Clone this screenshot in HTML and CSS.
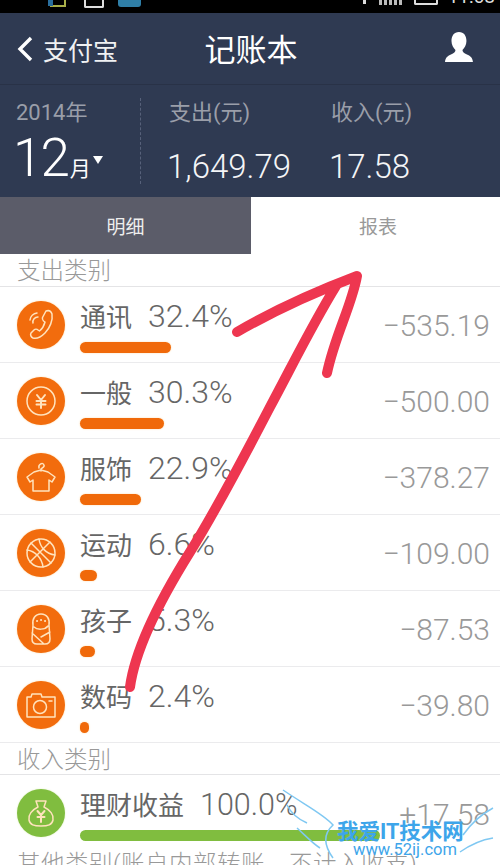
FILE: index.html
```html
<!DOCTYPE html>
<html>
<head>
    <title>记账本</title>
    <link rel="stylesheet" href="styles.css">
</head>
<body>
    <div class="statusbar">
        <div class="status-left">
            <svg width="20" height="13" viewBox="0 0 20 13"><rect x="3" y="-6" width="14" height="12" fill="none" stroke="#a9b04a" stroke-width="2"/><rect x="0" y="0" width="5" height="6" fill="#2a6f9e"/></svg>
            <span class="status-box"></span>
            <span class="status-app"></span>
        </div>
        <div class="status-right">
            <span class="status-dot"></span>
            <span class="status-signal"></span>
            <span class="status-box status-battery"></span>
            <span class="status-time">11:08</span>
        </div>
    </div>

    <div class="nav">
        <div class="nav-back">
            <svg width="16" height="26" viewBox="0 0 16 26"><path d="M14 2 L3 13 L14 24" fill="none" stroke="#fff" stroke-width="3.4"/></svg>
            <span>支付宝</span>
        </div>
        <div class="nav-title">记账本</div>
        <svg class="nav-user" width="28" height="30" viewBox="0 0 28 30"><path d="M14 0 C9 0 6.500 4 6.500 9 C6.500 13 8.500 16 10.500 18 C10.500 20 9 21 6 22.500 C3 24 .5 25 0 30 L28 30 C27.500 25 25 24 22 22.500 C19 21 17.500 20 17.500 18 C19.500 16 21.500 13 21.500 9 C21.500 4 19 0 14 0 Z" fill="#fff"/></svg>
    </div>

    <div class="summary">
        <div class="period">
            <div class="summary-label">2014年</div>
            <div class="month"><span class="month-num">12</span><span class="month-unit">月</span><span class="caret"></span></div>
        </div>
        <div class="stat stat-out">
            <div class="summary-label">支出(元)</div>
            <div class="stat-value">1,649.79</div>
        </div>
        <div class="stat">
            <div class="summary-label">收入(元)</div>
            <div class="stat-value">17.58</div>
        </div>
    </div>

    <div class="tabs">
        <div class="tab tab-active">明细</div>
        <div class="tab">报表</div>
    </div>

    <div class="section-title">支出类别</div>

    <div class="row">
        <div class="cat-icon">
            <svg width="48" height="48" viewBox="0 0 48 48"><path d="M29 10 C32 9 34 10 35 13 C36 19 33 27 28 32 C24 36 19 38 16 37 C14 36 13 34 14 32 L17 29 C18 28 20 28 21 29 L22.500 30 C25 28 27 25 28 21 L26.500 20 C25.500 19 25 18 25.500 16.500 Z M16 22 A5 5 0 0 1 21 16 M13 19 A8 8 0 0 1 20 12" class="glyph"/></svg>
        </div>
        <div class="cat-body">
            <div class="cat-line"><span class="cat-name">通讯</span><span class="cat-pct">32.4%</span></div>
            <div class="bar" style="width: 91px"></div>
        </div>
        <div class="amount">−535.19</div>
    </div>
    <div class="row">
        <div class="cat-icon">
            <svg width="48" height="48" viewBox="0 0 48 48"><circle cx="24" cy="24" r="14" class="glyph"/><path d="M20 18 L24 23 L28 18 M19.500 24 H28.500 M19.500 27.500 H28.500 M24 23 V31" class="glyph glyph-bold"/></svg>
        </div>
        <div class="cat-body">
            <div class="cat-line"><span class="cat-name">一般</span><span class="cat-pct">30.3%</span></div>
            <div class="bar" style="width: 84px"></div>
        </div>
        <div class="amount">−500.00</div>
    </div>
    <div class="row">
        <div class="cat-icon">
            <svg width="48" height="48" viewBox="0 0 48 48"><path d="M22 15 C21 11 26 9 27 12 C28 14 25 15 24 16 V18 M17 19 L24 17 L31 19 L38 24 L35 29 L32 27 V38 H16 V27 L13 29 L10 24 Z" class="glyph"/></svg>
        </div>
        <div class="cat-body">
            <div class="cat-line"><span class="cat-name">服饰</span><span class="cat-pct">22.9%</span></div>
            <div class="bar" style="width: 61px"></div>
        </div>
        <div class="amount">−378.27</div>
    </div>
    <div class="row">
        <div class="cat-icon">
            <svg width="48" height="48" viewBox="0 0 48 48"><circle cx="24" cy="24" r="14" class="glyph"/><path d="M14 14 L34 34 M33 13 L13 33 M22 10 C23 18 29 25 38 26 M10 21 C18 22 25 29 26 38" class="glyph"/></svg>
        </div>
        <div class="cat-body">
            <div class="cat-line"><span class="cat-name">运动</span><span class="cat-pct">6.6%</span></div>
            <div class="bar" style="width: 17px"></div>
        </div>
        <div class="amount">−109.00</div>
    </div>
    <div class="row">
        <div class="cat-icon">
            <svg width="48" height="48" viewBox="0 0 48 48"><path d="M24 9 C30 9 33 14 32 20 L33 34 C33 37 31 39 28 39 H20 C17 39 15 37 15 34 L16 20 C15 14 18 9 24 9 Z M17 22 C20 25 28 25 31 21 M15 28 L27 39 M33 27 L24 32" class="glyph"/><path d="M20 16 H20.100 M24 15 H24.100 M28 16 H28.100" class="glyph glyph-bold"/></svg>
        </div>
        <div class="cat-body">
            <div class="cat-line"><span class="cat-name">孩子</span><span class="cat-pct">5.3%</span></div>
            <div class="bar" style="width: 15px"></div>
        </div>
        <div class="amount">−87.53</div>
    </div>
    <div class="row">
        <div class="cat-icon">
            <svg width="48" height="48" viewBox="0 0 48 48"><path d="M10 16 H14 L15 13 H24 L25 16 H38 V36 H10 Z" class="glyph"/><circle cx="23" cy="26" r="6.500" class="glyph"/><path d="M32 20 H35" class="glyph"/></svg>
        </div>
        <div class="cat-body">
            <div class="cat-line"><span class="cat-name">数码</span><span class="cat-pct">2.4%</span></div>
            <div class="bar" style="width: 9px"></div>
        </div>
        <div class="amount">−39.80</div>
    </div>

    <div class="section-title section-income">收入类别</div>

    <div class="row row-income">
        <div class="cat-icon cat-icon-green">
            <svg width="48" height="48" viewBox="0 0 48 48"><path d="M19 12 H29 L27 18 C33 21 37 26 36 31 C35 36 31 37 24 37 C17 37 13 36 12 31 C11 26 15 21 21 18 Z" class="glyph"/><path d="M20.500 22 L24 26 L27.500 22 M20.500 28 H27.500 M24 26 V33" class="glyph glyph-bold"/></svg>
        </div>
        <div class="cat-body">
            <div class="cat-line"><span class="cat-name">理财收益</span><span class="cat-pct">100.0%</span></div>
            <div class="bar bar-green" style="width: 300px"></div>
        </div>
        <div class="amount">+17.58</div>
    </div>

    <div class="section-title section-other">其他类别(账户内部转账，不计入收支)</div>

    <svg class="arrow" width="500" height="865" viewBox="0 0 500 865">
        <path d="M130 687 C135 650 160 600 190 552 C215 512 245 455 270 407 C292 366 312 325 336 286 M237 332 C275 310 320 290 357 276 C352 305 335 335 327 373" fill="none" stroke="#ee3650" stroke-width="10" stroke-linecap="round" stroke-linejoin="round"/>
    </svg>

    <div class="watermark">
        <svg width="220" height="80" viewBox="0 0 220 80"><path d="M3 5 C25 20 45 30 53 40 C42 50 45 62 53 73 M7 20 C12 30 20 35 27 38 M17 43 C25 50 32 58 40 63 M213 23 C200 30 190 40 183 50 M213 53 C200 55 190 60 180 67" fill="none" stroke="#7fc8f2" stroke-width="1.500"/></svg>
        <div class="wm-title">我爱IT技术网</div>
        <div class="wm-url">www.52ij.com</div>
    </div>
</body>
</html>
```

FILE: styles.css
```css
body {
    font-family: "Roboto", "Noto Sans CJK SC", sans-serif;
    background-color: white;
    margin: 0;
    width: 500px;
    height: 865px;
    overflow: hidden;
    position: relative;
}
.statusbar {
    height: 13px;
    background-color: #000;
    display: flex;
    justify-content: space-between;
    overflow: hidden;
    padding: 0 5px 0 48px;
}
.status-left, .status-right {
    display: flex;
    gap: 14px;
    align-items: flex-start;
}
.status-box {
    display: block;
    width: 16px;
    height: 6px;
    margin-left: 2px;
    border: 2px solid #ddd;
    border-top: none;
    border-radius: 0 0 2px 2px;
}
.status-app {
    display: block;
    width: 23px;
    height: 7px;
    background-color: #2f7fa8;
    border-radius: 0 0 3px 3px;
}
.status-right {
    gap: 10px;
}
.status-dot {
    display: block;
    width: 3px;
    height: 4px;
    margin-right: 3px;
    background-color: #ddd;
}
.status-signal {
    display: block;
    width: 23px;
    height: 5px;
    background: repeating-linear-gradient(90deg, #bbb 0 3px, #000 3px 5px);
}
.status-battery {
    width: 20px;
    height: 3px;
}
.status-time {
    color: #ddd;
    font-size: 19px;
    line-height: 21px;
    margin-top: -14px;
}
.nav {
    height: 71px;
    background-color: #2f3a52;
    border-bottom: 1px solid #293247;
    display: flex;
    align-items: center;
    padding: 0 27px 0 17px;
    color: white;
}
.nav-back {
    display: flex;
    align-items: center;
    gap: 10px;
    font-size: 25px;
    color: #f0f1f3;
    width: 188px;
}
.nav-title {
    font-size: 31px;
    width: 241px;
    margin-top: -3px;
}
.nav-user {
    margin-top: -4px;
}
.summary {
    height: 112px;
    background-color: #2f3a52;
    display: flex;
    color: white;
}
.summary-label {
    font-size: 22px;
    line-height: 30px;
    color: #9a9ea9;
}
.period {
    width: 124px;
    height: 86px;
    margin-top: 13px;
    padding-left: 16px;
    border-right: 1px dashed #57617a;
}
.month {
    display: flex;
    align-items: baseline;
    line-height: 58px;
    height: 58px;
    margin-top: 1px;
    margin-left: -3px;
}
.month-num {
    font-size: 53px;
    font-weight: 300;
    letter-spacing: -2px;
}
.month-unit {
    font-size: 21px;
    margin-left: 2px;
}
.caret {
    width: 0;
    height: 0;
    margin-left: 2px;
    border-left: 5px solid transparent;
    border-right: 5px solid transparent;
    border-top: 8px solid white;
    align-self: flex-start;
    margin-top: 27px;
}
.stat {
    margin-top: 13px;
}
.stat-out {
    width: 162px;
    margin-left: 28px;
}
.stat-value {
    font-size: 33px;
    font-weight: 300;
    line-height: 40px;
    margin-top: 19px;
    margin-left: -2px;
    color: #f4f5f7;
}
.tabs {
    height: 57px;
    display: flex;
}
.tab {
    width: 249px;
    box-sizing: border-box;
    padding-left: 5px;
    display: flex;
    align-items: center;
    justify-content: center;
    font-size: 19px;
    color: #999;
}
.tab-active {
    width: 251px;
    padding-left: 0;
    background-color: #5b5c69;
    color: #eee;
}
.section-title {
    height: 33px;
    box-sizing: border-box;
    padding-left: 17px;
    font-size: 23.500px;
    line-height: 35px;
    color: #999;
    border-bottom: 1px solid #e4e4e6;
    font-weight: 300;
}
.section-income {
    height: 32px;
    line-height: 35px;
    white-space: nowrap;
}
.section-other {
    border-bottom: none;
    white-space: nowrap;
    margin-top: -4px;
    letter-spacing: .5px;
}
.row {
    height: 76px;
    box-sizing: border-box;
    display: flex;
    align-items: center;
    padding: 0 10px 0 17px;
    border-bottom: 1px solid #ebebed;
}
.row-income {
    border-bottom: none;
}
.cat-icon {
    width: 48px;
    height: 48px;
    flex-shrink: 0;
    border-radius: 50%;
    background-color: #f26c0d;
    box-shadow: 0 0 2px #ffd9a8;
}
.cat-icon-green {
    background-color: #80bd3f;
    box-shadow: 0 0 2px #dff0c0;
}
.glyph {
    fill: none;
    stroke: #ffe3bd;
    stroke-width: 1.500;
    stroke-linejoin: round;
    stroke-linecap: round;
}
.glyph-bold {
    stroke-width: 2;
}
.cat-body {
    margin-left: 15px;
}
.cat-line {
    display: flex;
    align-items: baseline;
    gap: 15px;
    height: 39px;
    line-height: 39px;
    color: #666;
    white-space: nowrap;
}
.cat-name {
    font-size: 26px;
    width: 53px;
}
.row-income .cat-name {
    width: 105px;
}
.cat-pct {
    font-size: 32px;
    font-weight: 300;
}
.row-income .cat-pct {
    font-size: 30.500px;
}
.bar {
    height: 11px;
    margin-top: 6px;
    border-radius: 6px;
    background-color: #f0690a;
    box-shadow: 0 0 2px #ffd9a8;
}
.bar-green {
    background-color: #80bd3f;
    box-shadow: none;
}
.amount {
    font-size: 30px;
    font-weight: 300;
    color: #999;
    margin-left: auto;
    padding-top: 2px;
}
.arrow {
    position: absolute;
    top: 0;
    left: 0;
}
.watermark {
    position: absolute;
    left: 280px;
    top: 785px;
    width: 220px;
    height: 80px;
    color: #3da5ea;
}
.watermark svg {
    position: absolute;
    left: 0;
    top: 0;
}
.wm-title {
    position: absolute;
    left: 57px;
    top: 34px;
    font-size: 21.500px;
    line-height: 26px;
    font-weight: 700;
    white-space: nowrap;
}
.wm-url {
    position: absolute;
    left: 73px;
    top: 55px;
    font-size: 16.500px;
    line-height: 20px;
    white-space: nowrap;
}
```
